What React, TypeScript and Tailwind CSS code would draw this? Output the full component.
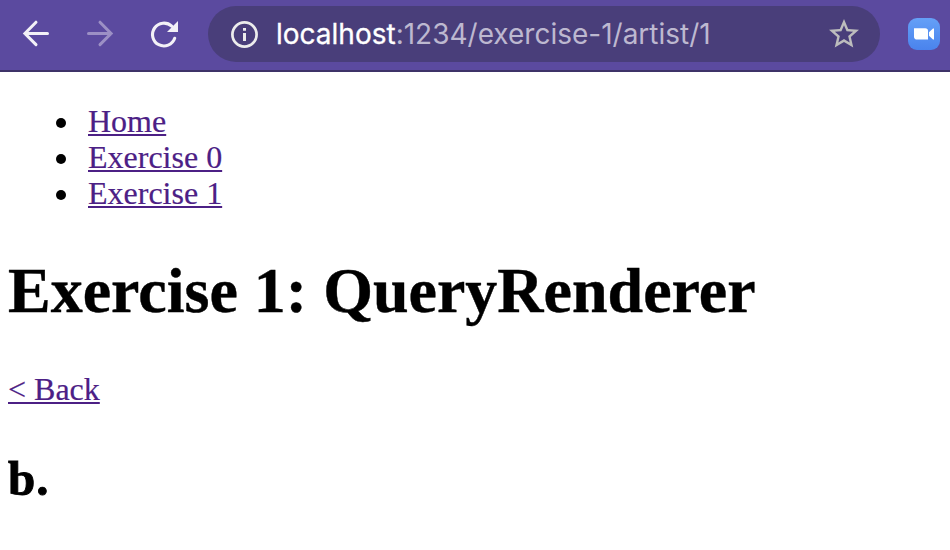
import React from "react";

function BackArrow() {
  return (
    <svg width="32" height="32" viewBox="0 0 32 32" fill="none" stroke="currentColor" strokeWidth="3" strokeLinecap="round" strokeLinejoin="miter">
      <path d="M27.5 15.5H5M16 4.2L4.9 15.5L16 26.6" />
    </svg>
  );
}

function ForwardArrow() {
  return (
    <svg width="32" height="32" viewBox="0 0 32 32" fill="none" stroke="currentColor" strokeWidth="3" strokeLinecap="round">
      <path d="M4.5 15.5H27M16 4.2L27.1 15.5L16 26.6" />
    </svg>
  );
}

function Reload() {
  return (
    <svg width="32" height="32" viewBox="0 0 32 32" fill="none">
      <path d="M26.7 20.3A11.4 11.4 0 1 1 23.7 8.2" stroke="currentColor" strokeWidth="3.1" strokeLinecap="round" />
      <path d="M30 3V14H19Z" fill="currentColor" />
    </svg>
  );
}

function Info() {
  return (
    <svg width="28" height="28" viewBox="0 0 28 28" fill="none">
      <circle cx="14.5" cy="14.5" r="12.1" stroke="currentColor" strokeWidth="2.7" />
      <path d="M13 8H16V10.8H13ZM13 13H16V21H13Z" fill="currentColor" />
    </svg>
  );
}

function Star() {
  return (
    <svg width="36" height="36" viewBox="0 0 24 24" fill="currentColor">
      <path d="M22 9.24l-7.19-.62L12 2 9.19 8.63 2 9.24l5.46 4.73L5.82 21 12 17.27 18.18 21l-1.63-7.03L22 9.24zM12 15.4l-3.76 2.27 1-4.28-3.32-2.88 4.38-.38L12 6.1l1.71 4.04 4.38.38-3.32 2.88 1 4.28L12 15.4z" />
    </svg>
  );
}

function Camera() {
  return (
    <svg width="32" height="32" viewBox="0 0 32 32" fill="#fff">
      <path d="M6 10.3H17.2Q20 10.3 20 13V21.6H9.2Q6 21.6 6 18.8Z" />
      <path d="M21 14.2L25 10.6H26V21.4H25L21 17.8Z" />
    </svg>
  );
}

function Toolbar() {
  return (
    <header className="flex h-[72px] items-start border-b-2 border-[#3e3368] bg-[#5b4a9f]">
      <nav className="flex gap-8 pt-[18px] pl-5 text-[#f3f1f7]">
        <button><BackArrow /></button>
        <button className="text-[#9c90c5]"><ForwardArrow /></button>
        <button><Reload /></button>
      </nav>
      <div className="mt-1.5 ml-7 flex h-14 w-[672px] items-center rounded-full bg-[#493e7a] pr-[18px] pl-[22px]">
        <span className="text-[#ececec]"><Info /></span>
        <div className="ml-[18px] grow font-['Inter',sans-serif] text-[28px] leading-9 whitespace-nowrap text-[#bdb8d0]">
          <span className="text-white [-webkit-text-stroke:0.3px_white]">localhost</span>:1234/exercise-1/artist/1
        </div>
        <span className="text-[#bdbdbd]"><Star /></span>
      </div>
      <div className="mt-[18px] ml-7 size-8 overflow-hidden rounded-[9px] bg-linear-to-b from-[#65a0f7] to-[#4a83ed]">
        <Camera />
      </div>
    </header>
  );
}

const links = ["Home", "Exercise 0", "Exercise 1"];
const linkStyle = "text-[#4c2085] underline decoration-2 underline-offset-[2px] [text-decoration-skip-ink:none] [-webkit-text-stroke:0.2px_#4c2085]";

export default function App() {
  return (
    <div className="h-[550px] overflow-hidden bg-white font-['Liberation_Serif',serif] text-black">
      <Toolbar />
      <main className="px-2 pt-[31px]">
        <ul className="text-[32px] leading-9">
          {links.map((label) => (
            <li key={label} className="flex items-center pl-12">
              <span className="mt-1 mr-[22px] size-2.5 rounded-full bg-black" />
              <a href="#" className={linkStyle}>{label}</a>
            </li>
          ))}
        </ul>
        <h1 className="mt-[43px] text-[64px] leading-[74px] font-bold [-webkit-text-stroke:0.4px_black]">Exercise 1: QueryRenderer</h1>
        <a href="#" className={`mt-[43px] block w-fit text-[32px] leading-9 ${linkStyle}`}>&lt; Back</a>
        <h2 className="mt-[45px] text-[49px] leading-[54px] font-bold tracking-[1px] [-webkit-text-stroke:0.9px_black]">b.</h2>
      </main>
    </div>
  );
}
